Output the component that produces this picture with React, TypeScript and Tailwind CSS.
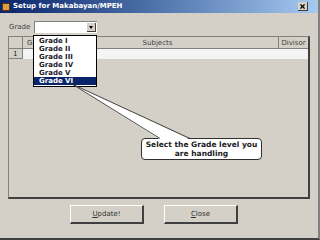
import { X } from "lucide-react";

const grades = ["Grade I", "Grade II", "Grade III", "Grade IV", "Grade V", "Grade VI"];

function TitleBar() {
  return (
    <div className="flex h-[13px] items-center justify-between bg-gradient-to-r from-[#0a246a] to-[#a6caf0] pl-[2px] pr-[10px]">
      <div className="flex items-center gap-[3px]">
        <div className="h-[8px] w-[8px] border border-[#603010] bg-[#d8a040]" />
        <span className="text-[7px] font-bold leading-none text-white">Setup for Makabayan/MPEH</span>
      </div>
      <div className="flex h-[9px] w-[10px] items-center justify-center border-b border-r border-[#404040] bg-[#d4d0c8]">
        <X size={7} strokeWidth={4} className="text-black" />
      </div>
    </div>
  );
}

function Button({ label, hot }: { label: string; hot: string }) {
  return (
    <div className="flex h-[19px] w-[74px] items-center justify-center border-b-2 border-r-2 border-l border-t border-b-[#404040] border-r-[#404040] border-l-white border-t-white text-[7px] text-[#303030]">
      <span>
        <u>{hot}</u>
        {label.slice(1)}
      </span>
    </div>
  );
}

export default function App() {
  return (
    <div
      className="relative h-[240px] w-[320px] overflow-hidden border-b-2 border-r-2 border-b-[#404040] border-r-[#808080] bg-[#d4d0c8]"
      style={{ fontFamily: "Tahoma, 'DejaVu Sans', sans-serif" }}
    >
      <TitleBar />

      <div className="flex items-center gap-[4px] pl-[9px] pt-[8px]">
        <span className="text-[7px] text-[#404040]">Grade</span>
        <div className="flex h-[12px] w-[63px] items-center justify-end border-l border-t border-l-[#808080] border-t-[#808080] bg-white pr-[1px]">
          <div className="flex h-[9px] w-[9px] items-center justify-center border-b border-r border-[#404040] bg-[#d4d0c8]">
            <div className="h-0 w-0 border-x-[2px] border-t-[3px] border-x-transparent border-t-black" />
          </div>
        </div>
      </div>

      <div className="mx-[8px] mt-[3px] flex h-[163px] flex-col border-b-2 border-r-2 border-l border-t border-b-[#404040] border-r-[#404040] border-l-[#808080] border-t-[#808080] bg-[#d4d0c8]">
        <div className="flex h-[12px] border-b border-[#808080] text-[7px] text-[#404040]">
          <div className="w-[14px] border-r border-[#808080]" />
          <div className="w-[14px] pl-[4px] leading-[12px]">G</div>
          <div className="flex-1 border-r border-[#808080] text-center leading-[12px]">Subjects</div>
          <div className="w-[29px] text-center leading-[12px]">Divisor</div>
        </div>
        <div className="flex h-[10px] text-[7px] text-[#202020]">
          <div className="w-[14px] border-r border-b border-[#808080] pl-[4px] leading-[10px]">1</div>
          <div className="flex-1 bg-[#f4f4f4]" />
        </div>
      </div>

      <div className="mt-[6px] flex justify-center gap-[20px] pr-[10px]">
        <Button label="Update!" hot="U" />
        <Button label="Close" hot="C" />
      </div>

      <div className="absolute left-[33px] top-[35px] w-[64px] border border-black bg-white py-[1px] text-[7px] font-bold text-[#1a1a2a]">
        {grades.map((g, i) => (
          <div
            key={g}
            className={
              i === grades.length - 1
                ? "h-[8px] bg-[#0a246a] pl-[5px] leading-[8px] text-white"
                : "h-[8px] pl-[5px] leading-[8px]"
            }
          >
            {g}
          </div>
        ))}
      </div>

      <div className="absolute left-[141px] top-[138px] flex h-[22px] w-[121px] flex-col items-center justify-center rounded-[4px] border border-[#303030] bg-white text-[7.5px] font-bold leading-[9px] text-[#202020]">
        <span>Select the Grade level you</span>
        <span>are handling</span>
      </div>

      <svg className="absolute left-0 top-0" width="320" height="240">
        <polygon points="72,84 160,139.5 190,139.5" fill="white" />
        <polyline points="160,138.5 72,84 190,138.5" fill="none" stroke="#202020" strokeWidth="0.8" />
      </svg>
    </div>
  );
}
